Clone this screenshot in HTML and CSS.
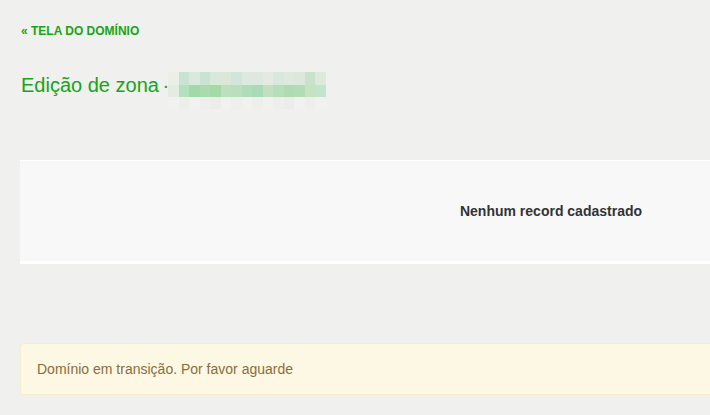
FILE: index.html
```html
<!DOCTYPE html>
<html lang="pt-BR">
<head>
<meta charset="utf-8">
<title>Edição de zona</title>
<link rel="stylesheet" href="styles.css">
</head>
<body>
<div class="page">
  <a class="back" href="#">« TELA DO DOMÍNIO</a>
  <h1 class="title">
    <span class="title-text">Edição de zona<span class="sep"> ·</span></span>
    <span class="mosaic" aria-hidden="true">
      <i class="a1"></i><i class="a2"></i><i class="a3"></i><i class="a2"></i><i class="a5"></i><i class="a6"></i><i class="a7"></i><i class="a8"></i><i class="a9"></i><i class="a10"></i><i class="a11"></i><i class="a12"></i><i class="a13"></i><i class="a14"></i><i class="a15"></i>
      <i class="b1"></i><i class="b2"></i><i class="b3"></i><i class="b4"></i><i class="b5"></i><i class="b6"></i><i class="b7"></i><i class="b8"></i><i class="b9"></i><i class="b10"></i><i class="b11"></i><i class="b12"></i><i class="b13"></i><i class="b14"></i><i class="b15"></i>
      <i class="c1"></i><i class="c2"></i><i class="c1"></i><i class="c2"></i><i class="c3"></i><i class="c1"></i><i class="c2"></i><i class="c1"></i><i class="c2"></i><i class="c1"></i><i class="c2"></i><i class="c3"></i><i class="c1"></i><i class="c2"></i><i class="c1"></i>
    </span>
  </h1>
  <div class="panel">Nenhum record cadastrado</div>
  <div class="alert">Domínio em transição. Por favor aguarde</div>
</div>
</body>
</html>
```
FILE: styles.css
```css
html, body {
  margin: 0;
  overflow: hidden;
  background: #f0f0ee;
}
body {
  font-family: "Liberation Sans", Arial, sans-serif;
}
.page {
  padding: 23px 0 0 20px;
}
.back {
  display: block;
  margin-left: 1px;
  font-size: 12px;
  line-height: 17px;
  font-weight: 700;
  color: #16a516;
  text-decoration: none;
}
.title {
  display: flex;
  align-items: flex-start;
  margin: 34px 0 0 1px;
  font-size: 20px;
  line-height: 22px;
  font-weight: 400;
  color: #16a516;
}
.title-text {
  margin-right: -1px;
}
.sep {
  word-spacing: -2px;
}
.mosaic {
  display: grid;
  grid-template-columns: repeat(15, 10.5px);
  grid-template-rows: 12.5px 12.5px 12px;
  margin-top: -2px;
}
.mosaic i { display: block; }
.a1 { background: #eceee8; }
.a2 { background: #c6e4cf; }
.a3 { background: #dbe9dc; }
.a5 { background: #d9e8da; }
.a6 { background: #dbe8d6; }
.a7 { background: #d1e5db; }
.a8 { background: #dde9df; }
.a9 { background: #dfe8df; }
.a10 { background: #e4e9e2; }
.a11 { background: #d8e8dc; }
.a12 { background: #dce9dd; }
.a13 { background: #dde8dc; }
.a14 { background: #c8e2cc; }
.a15 { background: #dce9dd; }
.b1 { background: #e4ebe3; }
.b2 { background: #b5e0c0; }
.b3 { background: #a2d9a8; }
.b4 { background: #acdaaf; }
.b5 { background: #a5d9a6; }
.b6 { background: #bcdfbc; }
.b7 { background: #b9dfbf; }
.b8 { background: #b0dcb9; }
.b9 { background: #aadbb9; }
.b10 { background: #c1e0bf; }
.b11 { background: #b6deba; }
.b12 { background: #b0dbb2; }
.b13 { background: #b0dcb6; }
.b14 { background: #c5e2c1; }
.b15 { background: #c2e3cc; }
.c1 { background: #f1f1ef; }
.c2 { background: #eeeeec; }
.c3 { background: #ececea; }
.panel {
  box-sizing: border-box;
  width: 1062px;
  height: 104px;
  margin-top: 51px;
  border-top: 1px solid #ffffff;
  border-bottom: 3px solid #ffffff;
  background: #f8f8f8;
  display: flex;
  align-items: center;
  justify-content: center;
  font-size: 14px;
  font-weight: 700;
  color: #333333;
}
.alert {
  box-sizing: border-box;
  width: 1062px;
  margin-top: 79px;
  padding: 15px 16px;
  border: 1px solid #faebcc;
  border-radius: 4px;
  background: #fcf8e3;
  color: #8a6d3b;
  font-size: 14px;
  line-height: 20px;
}
```
